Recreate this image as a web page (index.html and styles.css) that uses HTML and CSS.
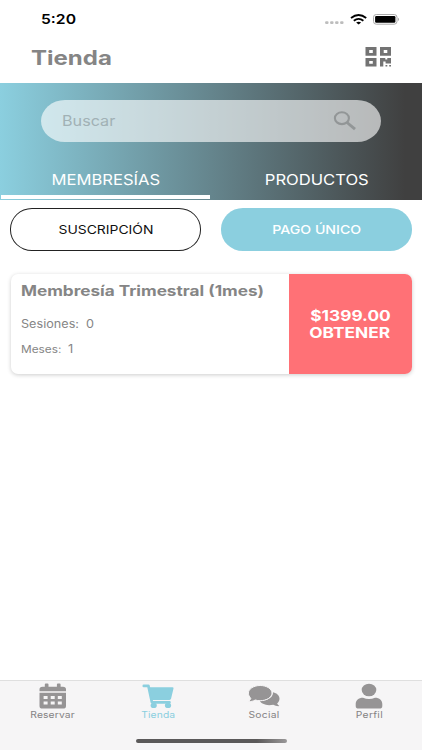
FILE: index.html
```html
<!DOCTYPE html>
<html lang="es">
<head>
<meta charset="utf-8">
<title>Tienda</title>
<link rel="stylesheet" href="styles.css">
</head>
<body>
<div class="app">
  <div class="status">
    <span class="wide time">5:20</span>
    <svg class="status-icons" width="76" height="14" viewBox="1.4 0 76 14">
      <g fill="#bdbdbd"><rect x="2.500" y="7.300" width="3.400" height="2.600" rx="1"/><rect x="7.500" y="7.300" width="3.400" height="2.600" rx="1"/><rect x="12.500" y="7.300" width="3.400" height="2.600" rx="1"/><rect x="17.500" y="7.300" width="3.400" height="2.600" rx="1"/></g>
      <g fill="none" stroke="#000" stroke-width="1.900"><path d="M28.400 3.900Q36-1.900 43.600 3.900"/><path d="M31.200 6.700Q36 3.100 40.800 6.700"/></g>
      <path d="M33.500 8.500Q36 6.900 38.500 8.500L36 10.500Z"/>
      <rect x="50.900" y=".5" width="23.500" height="9.700" rx="2.800" fill="#fff" stroke="#aaa"/>
      <rect x="52.500" y="2" width="20.300" height="6.700" rx="1.200"/>
      <path d="M75.400 3.700Q77.600 5.300 75.400 6.900Z" fill="#aaa"/>
    </svg>
  </div>
  <header class="header">
    <h1 class="wide">Tienda</h1>
    <svg width="27" height="20" viewBox="0 0 27 20" fill="#737373">
      <path fill-rule="evenodd" d="M.5 0h11v8.700H.5zM4.200 3v2.900h3.600V3zM15 0h11v8.700H15zM18.700 3v2.900h3.600V3zM.5 11h11v8.500H.5zM4.200 13.900v2.800h3.600v-2.800z"/>
      <path d="M15 11h5.300v1.600h2V11H26v5.500h-5.400v-2h-2.300v5H15zM20.500 18h1.800v1.500h-1.800zM24.200 18H26v1.500h-1.800z"/>
    </svg>
  </header>
  <section class="hero">
    <div class="search">
      <span class="wide buscar">Buscar</span>
      <svg width="24" height="20" viewBox="0 0 24 20" fill="none" stroke="#929697"><ellipse cx="8.900" cy="7.200" rx="7" ry="5.900" stroke-width="2.100"/><path d="M14 11.500L22 18.200" stroke-width="2.900"/></svg>
    </div>
    <nav class="tabs">
      <div class="tab active"><span class="wide membresias">MEMBRESÍAS</span></div>
      <div class="tab"><span class="wide productos">PRODUCTOS</span></div>
    </nav>
  </section>
  <main class="content">
    <div class="options">
      <button class="option outline"><span class="wide suscripcion">SUSCRIPCIÓN</span></button>
      <button class="option filled"><span class="wide pago">PAGO ÚNICO</span></button>
    </div>
    <article class="card">
      <div class="info">
        <h2><span class="wide titulo">Membresía Trimestral (1mes)</span></h2>
        <p class="sessions"><span class="wide">Sesiones:&nbsp; 0</span></p>
        <p class="months"><span class="wide meses">Meses:&nbsp; <b>1</b></span></p>
      </div>
      <button class="buy"><span class="wide price">$1399.00</span><span class="wide obtener">OBTENER</span></button>
    </article>
  </main>
  <footer class="bottom">
    <nav class="nav">
      <div class="item">
        <svg width="30" height="26" viewBox="0 0 30 26"><path fill="currentColor" fill-rule="evenodd" d="M1.500 9.800h26.500v13.200q0 2.600-3 2.600h-20.500q-3 0-3-2.600zM5.600 13v3h4v-3zM12.700 13v3h4v-3zM19.800 13v3h4v-3zM5.600 18.600v3h4v-3zM12.700 18.600v3h4v-3zM19.800 18.600v3h4v-3zM1.500 8.300V6.200q0-2.500 3-2.500h2.300V1.500q0-1 1-1h1.700q1 0 1 1v2.200h8.400V1.500q0-1 1-1h1.700q1 0 1 1v2.200h2.400q3 0 3 2.500v2.100z"/></svg>
        <span class="wide">Reservar</span>
      </div>
      <div class="item selected">
        <svg width="32" height="26" viewBox="0 0 32 26"><path d="M1.800 2.900h4.600l3.500 16.400H27.500" fill="none" stroke="currentColor" stroke-width="2.700" stroke-linecap="round" stroke-linejoin="round"/><path fill="currentColor" d="M7 4.300h23.300q1.500 0 1.200 1.300l-2.400 9.900q-.3 1.400-1.600 1.400H9.500z"/><ellipse cx="11.700" cy="22.400" rx="3.100" ry="2.700" fill="currentColor"/><ellipse cx="26" cy="22.400" rx="3.100" ry="2.700" fill="currentColor"/></svg>
        <span class="wide tienda">Tienda</span>
      </div>
      <div class="item">
        <svg width="32" height="26" viewBox="0 0 32 26"><path fill="currentColor" d="M25 9.300c4 .9 6.500 3.300 6.500 6.400 0 1.900-.9 3.500-2.400 4.800.4 1 1.200 1.800 2.200 2.600-2.200.2-4.300-.4-6-1.400-6.300 1.400-12.100-.5-13.700-4.100C19.500 18 25 14.700 25 9.300z"/><path fill="currentColor" stroke="#f6f5f6" stroke-width="1" d="M12.200 2.500c6.500 0 11.800 3.400 11.800 7.600s-5.300 7.600-11.800 7.600c-1.700 0-3.400-.2-4.900-.7-2 1.100-4.300 1.800-6.900 1.600 1.200-.9 2-2 2.400-3.300C1.300 13.900.4 12 .4 10.100c0-4.200 5.300-7.600 11.800-7.600z"/></svg>
        <span class="wide social">Social</span>
      </div>
      <div class="item">
        <svg width="30" height="26" viewBox="0 0 30 26" fill="currentColor"><ellipse cx="15" cy="7" rx="7.300" ry="6.300"/><path d="M9 14.700q6 2.700 12 0c4.500 0 7.300 2.700 7.300 6.300v1.900q0 2.600-3 2.600H4.700q-3 0-3-2.600V21c0-3.600 2.800-6.300 7.300-6.300z"/></svg>
        <span class="wide perfil">Perfil</span>
      </div>
    </nav>
    <div class="home"></div>
  </footer>
</div>
</body>
</html>
```
FILE: styles.css
```css
* { box-sizing: border-box; }
body { margin: 0; font-family: Inter, "Liberation Sans", sans-serif; background: #fff; color: #858585; }
h1, h2, p { margin: 0; }
button { border: 0; padding: 0; font-family: inherit; }
.app { width: 422px; height: 750px; display: flex; flex-direction: column; }

/* Wide lettering: --s is the horizontal stretch of each label */
.wide { display: inline-block; white-space: nowrap; transform: scaleX(var(--s, 1.2)); }

.status { height: 40px; padding: 14px 22px 0 40.5px; display: flex; justify-content: space-between; }
.time { font-size: 13.3px; line-height: 11px; font-weight: 600; color: #000; transform-origin: left; --s: 1.18; }
.header { height: 43px; padding: 6px 30px 0 30.5px; display: flex; justify-content: space-between; }
h1 { font-size: 20px; line-height: 24px; font-weight: 700; transform-origin: left; --s: 1.2; }
.status-icons { flex: none; overflow: visible; }
.header svg { margin-top: 1px; }

.hero { height: 117px; padding-top: 17px; display: flex; flex-direction: column; justify-content: space-between; background: linear-gradient(90deg, #8bcfdf 0%, #65858d 50%, #404040 96%); }
.search { height: 42px; margin: 0 41px; padding: 0 24px 0 21px; border-radius: 24px / 21px; display: flex; align-items: center; justify-content: space-between; background: rgba(255, 255, 255, .62); }
.buscar { margin-top: -2px; font-size: 14.2px; color: #a1b1b5; transform-origin: left; --s: 1.14; }
.tabs { display: grid; grid-template-columns: 1fr 1fr; height: 41px; }
.tab { display: flex; justify-content: center; padding-top: 12px; color: #fff; font-size: 14.3px; line-height: 18px; --s: 1.16; }
.active { border-bottom: 4px solid #fff; margin: 0 1px 1px; }

.content { flex: 1; padding: 8px 10px 0; }
.options { display: grid; grid-template-columns: 191px 191px; justify-content: space-between; }
.option { height: 43px; border-radius: 22px / 21px; font-size: 12.3px; }
.outline { border: 1px solid #222; background: #fff; color: #111; --s: 1.13; }
.filled { background: #8bcfdf; color: #fff; font-weight: 500; --s: 1.15; }

.card { margin: 23px 0 0 1px; height: 100px; display: flex; background: #fff; border-radius: 7px; overflow: hidden; box-shadow: 0 1px 4px rgba(0, 0, 0, .2); }
.info { flex: 1; padding: 8px 0 0 10px; }
.info .wide { transform-origin: left; }
h2 { font-size: 14.3px; line-height: 18px; font-weight: 700; }
.sessions { margin-top: 16px; font-size: 11.2px; line-height: 16px; --s: 1.13; }
.months { margin-top: 9px; font-size: 10.4px; line-height: 16px; --s: 1.14; }
.months b { font-weight: 400; font-size: 11.3px; }
.buy { width: 123px; padding-right: 1px; background: #ff7176; color: #fff; display: flex; flex-direction: column; align-items: center; justify-content: center; font-size: 14.4px; line-height: 17px; font-weight: 700; }

.bottom { height: 70px; background: #f6f5f6; border-top: 1px solid #dfdfdf; }
.nav { height: 58px; display: grid; grid-template-columns: repeat(4, 1fr); }
.item { display: flex; flex-direction: column; align-items: center; padding-top: 2px; color: #969495; font-size: 8.6px; line-height: 11px; letter-spacing: .1px; }
.item .wide { margin-top: 1px; color: #858384; }
.item .social, .item .perfil { letter-spacing: .25px; }
.item.selected, .item.selected .wide { color: #8bcfdf; }
.home { width: 151px; height: 4px; margin: 0 auto; border-radius: 3px; background: linear-gradient(90deg, #5b5959 0 80%, #9a9899); }
```
